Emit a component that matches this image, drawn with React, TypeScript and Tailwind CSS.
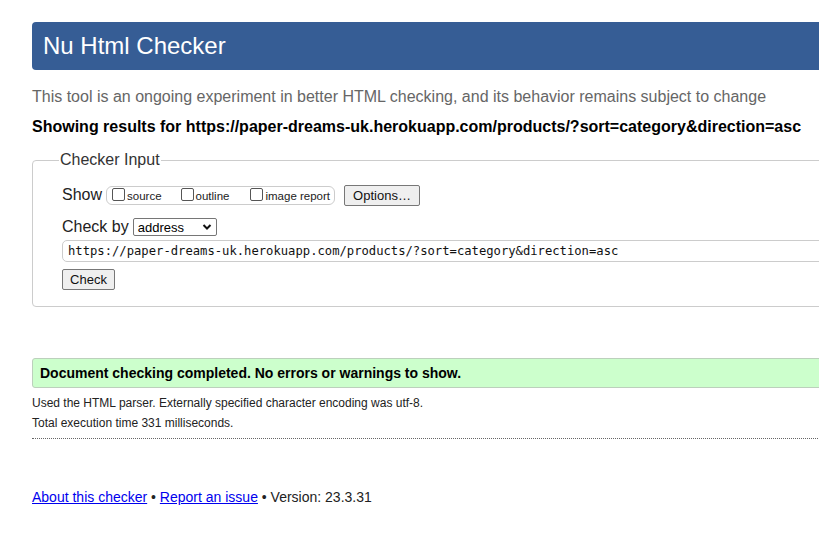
import React from "react";

const URL = "https://paper-dreams-uk.herokuapp.com/products/?sort=category&direction=asc";

function Checkbox({ label, className = "" }: { label: string; className?: string }) {
  return (
    <label className={`flex items-end gap-[2px] ${className}`}>
      <span className="inline-block w-[13px] h-[13px] border border-[#555] rounded-[2px] bg-white mb-[2px]" />
      <span className="text-[11.5px] leading-[13px] text-[#222]">{label}</span>
    </label>
  );
}

export default function App() {
  return (
    <div className="w-[819px] h-[543px] overflow-hidden bg-white font-['Liberation_Sans',Arial,sans-serif]">
      <div className="w-[900px] pl-[32px] pt-[22px]">
        {/* Header */}
        <div className="h-[48px] bg-[#365d95] rounded-[4px] flex items-center pl-[11px]">
          <h1 className="text-[24px] text-white leading-none">Nu Html Checker</h1>
        </div>

        <p className="mt-[18px] text-[16px] leading-[18px] text-[#666]">
          This tool is an ongoing experiment in better HTML checking, and its behavior remains subject to change
        </p>
        <p className="mt-[12px] text-[16px] leading-[18px] font-bold text-black">Showing results for {URL}</p>

        {/* Checker input fieldset */}
        <fieldset className="mt-[12px] h-[159px] border border-[#ccc] rounded-[4px] pl-[29px] pt-[12px]">
          <legend className="text-[16px] text-[#333] px-[1px] -ml-[3px]">Checker Input</legend>

          <div className="flex items-center h-[22px]">
            <span className="text-[16px] text-[#222]">Show</span>
            <div className="ml-[4px] flex items-center h-[19px] border border-[#ccc] rounded-[6px] pl-[5px] pr-[4px]">
              <Checkbox label="source" />
              <Checkbox label="outline" className="ml-[19px]" />
              <Checkbox label="image report" className="ml-[21px]" />
            </div>
            <button className="ml-[9px] h-[21px] w-[76px] border border-[#777] rounded-[2px] bg-[#efefef] text-[13px] text-[#111]">
              Options…
            </button>
          </div>

          <div className="mt-[11px] flex items-center h-[20px]">
            <span className="text-[16px] text-[#222]">Check by</span>
            <div className="ml-[4px] h-[18px] w-[84px] border border-[#767676] rounded-[2px] flex items-center justify-between px-[4px]">
              <span className="text-[13px] leading-none text-black">address</span>
              <svg width="10" height="8" viewBox="0 0 10 8">
                <path d="M1.5 2l3.5 3.5L8.5 2" stroke="#111" strokeWidth="2" fill="none" />
              </svg>
            </div>
          </div>

          <div className="mt-[3px] h-[22px] border border-[#ccc] rounded-l-[5px] flex items-center pl-[5px]">
            <span className="text-[12.2px] font-['DejaVu_Sans_Mono',monospace] text-[#111]">{URL}</span>
          </div>

          <button className="mt-[7px] h-[21px] w-[53px] border border-[#777] rounded-[2px] bg-[#efefef] text-[13px] text-[#111]">
            Check
          </button>
        </fieldset>

        {/* Result */}
        <div className="mt-[51px] h-[30px] bg-[#ccffcc] border border-[#bcd0bc] rounded-l-[3px] flex items-center pl-[7px]">
          <span className="text-[14px] font-bold text-black">Document checking completed. No errors or warnings to show.</span>
        </div>
        <p className="mt-[8px] text-[12px] leading-[14px] text-[#222]">
          Used the HTML parser. Externally specified character encoding was utf-8.
        </p>
        <p className="mt-[6px] text-[12px] leading-[14px] text-[#222]">Total execution time 331 milliseconds.</p>
        <div className="mt-[8px] border-t border-dotted border-[#666]" />

        {/* Footer */}
        <p className="mt-[48px] text-[14px] text-[#222]">
          <a href="#" className="text-[#0000ee] underline">About this checker</a> •{" "}
          <a href="#" className="text-[#0000ee] underline">Report an issue</a> • Version: 23.3.31
        </p>
      </div>
    </div>
  );
}
